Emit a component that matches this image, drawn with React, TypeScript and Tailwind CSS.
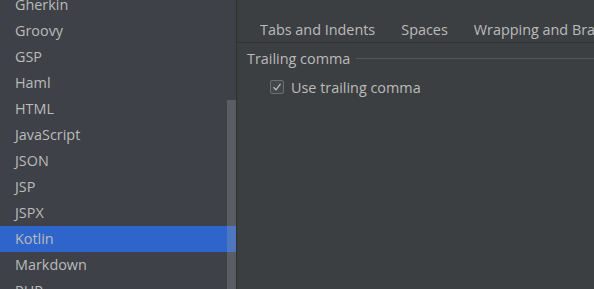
const languages = ["Gherkin", "Groovy", "GSP", "Haml", "HTML", "JavaScript", "JSON", "JSP", "JSPX", "Kotlin", "Markdown", "PHP"]

const tabs = ["Tabs and Indents", "Spaces", "Wrapping and Braces"]

export default function App() {
    return (
        <div
            className="flex h-[289px] w-[594px] overflow-hidden text-[14.4px] text-[#bbbbbb]"
            style={{ fontFamily: '"Open Sans", "Noto Sans", sans-serif' }}
        >
            {/* language list */}
            <div className="relative w-[236px] shrink-0 overflow-hidden bg-[#3e4147]">
                <ul className="mt-[-8px] flex flex-col">
                    {languages.map((lang) => (
                        <li
                            key={lang}
                            className={`flex h-[26px] items-center pl-[15px] ${lang === "Kotlin" ? "bg-[#2f65ca]" : ""}`}
                        >
                            {lang}
                        </li>
                    ))}
                </ul>
                <div className="absolute right-0 top-[100px] h-[200px] w-[9px] bg-[#9aa0aa]/30" />
            </div>
            <div className="w-px shrink-0 bg-[#2d2f32]" />

            {/* settings panel */}
            <div className="flex min-w-0 flex-1 flex-col bg-[#3c3f41]">
                <div className="flex h-[43px] shrink-0 items-end gap-[26px] whitespace-nowrap border-b border-[#313335] pb-[1px] pl-[23px]">
                    {tabs.map((tab) => (
                        <span key={tab}>{tab}</span>
                    ))}
                </div>
                <div className="flex items-center gap-[6px] whitespace-nowrap pl-[10px] pt-[5px]">
                    <span>Trailing comma</span>
                    <div className="h-px flex-1 bg-[#55585b]" />
                </div>
                <label className="mt-[7px] flex items-center gap-[7px] whitespace-nowrap pl-[33px]">
                    <span className="flex h-[14px] w-[14px] items-center justify-center rounded-[2px] border border-[#6b6e70] bg-[#43474a]">
                        <svg width="10" height="10" viewBox="0 0 10 10" fill="none">
                            <path d="M1.5 5.2 L4 7.8 L8.5 1.8" stroke="#bbbbbb" strokeWidth="1.3" />
                        </svg>
                    </span>
                    <span>Use trailing comma</span>
                </label>
            </div>
        </div>
    )
}
